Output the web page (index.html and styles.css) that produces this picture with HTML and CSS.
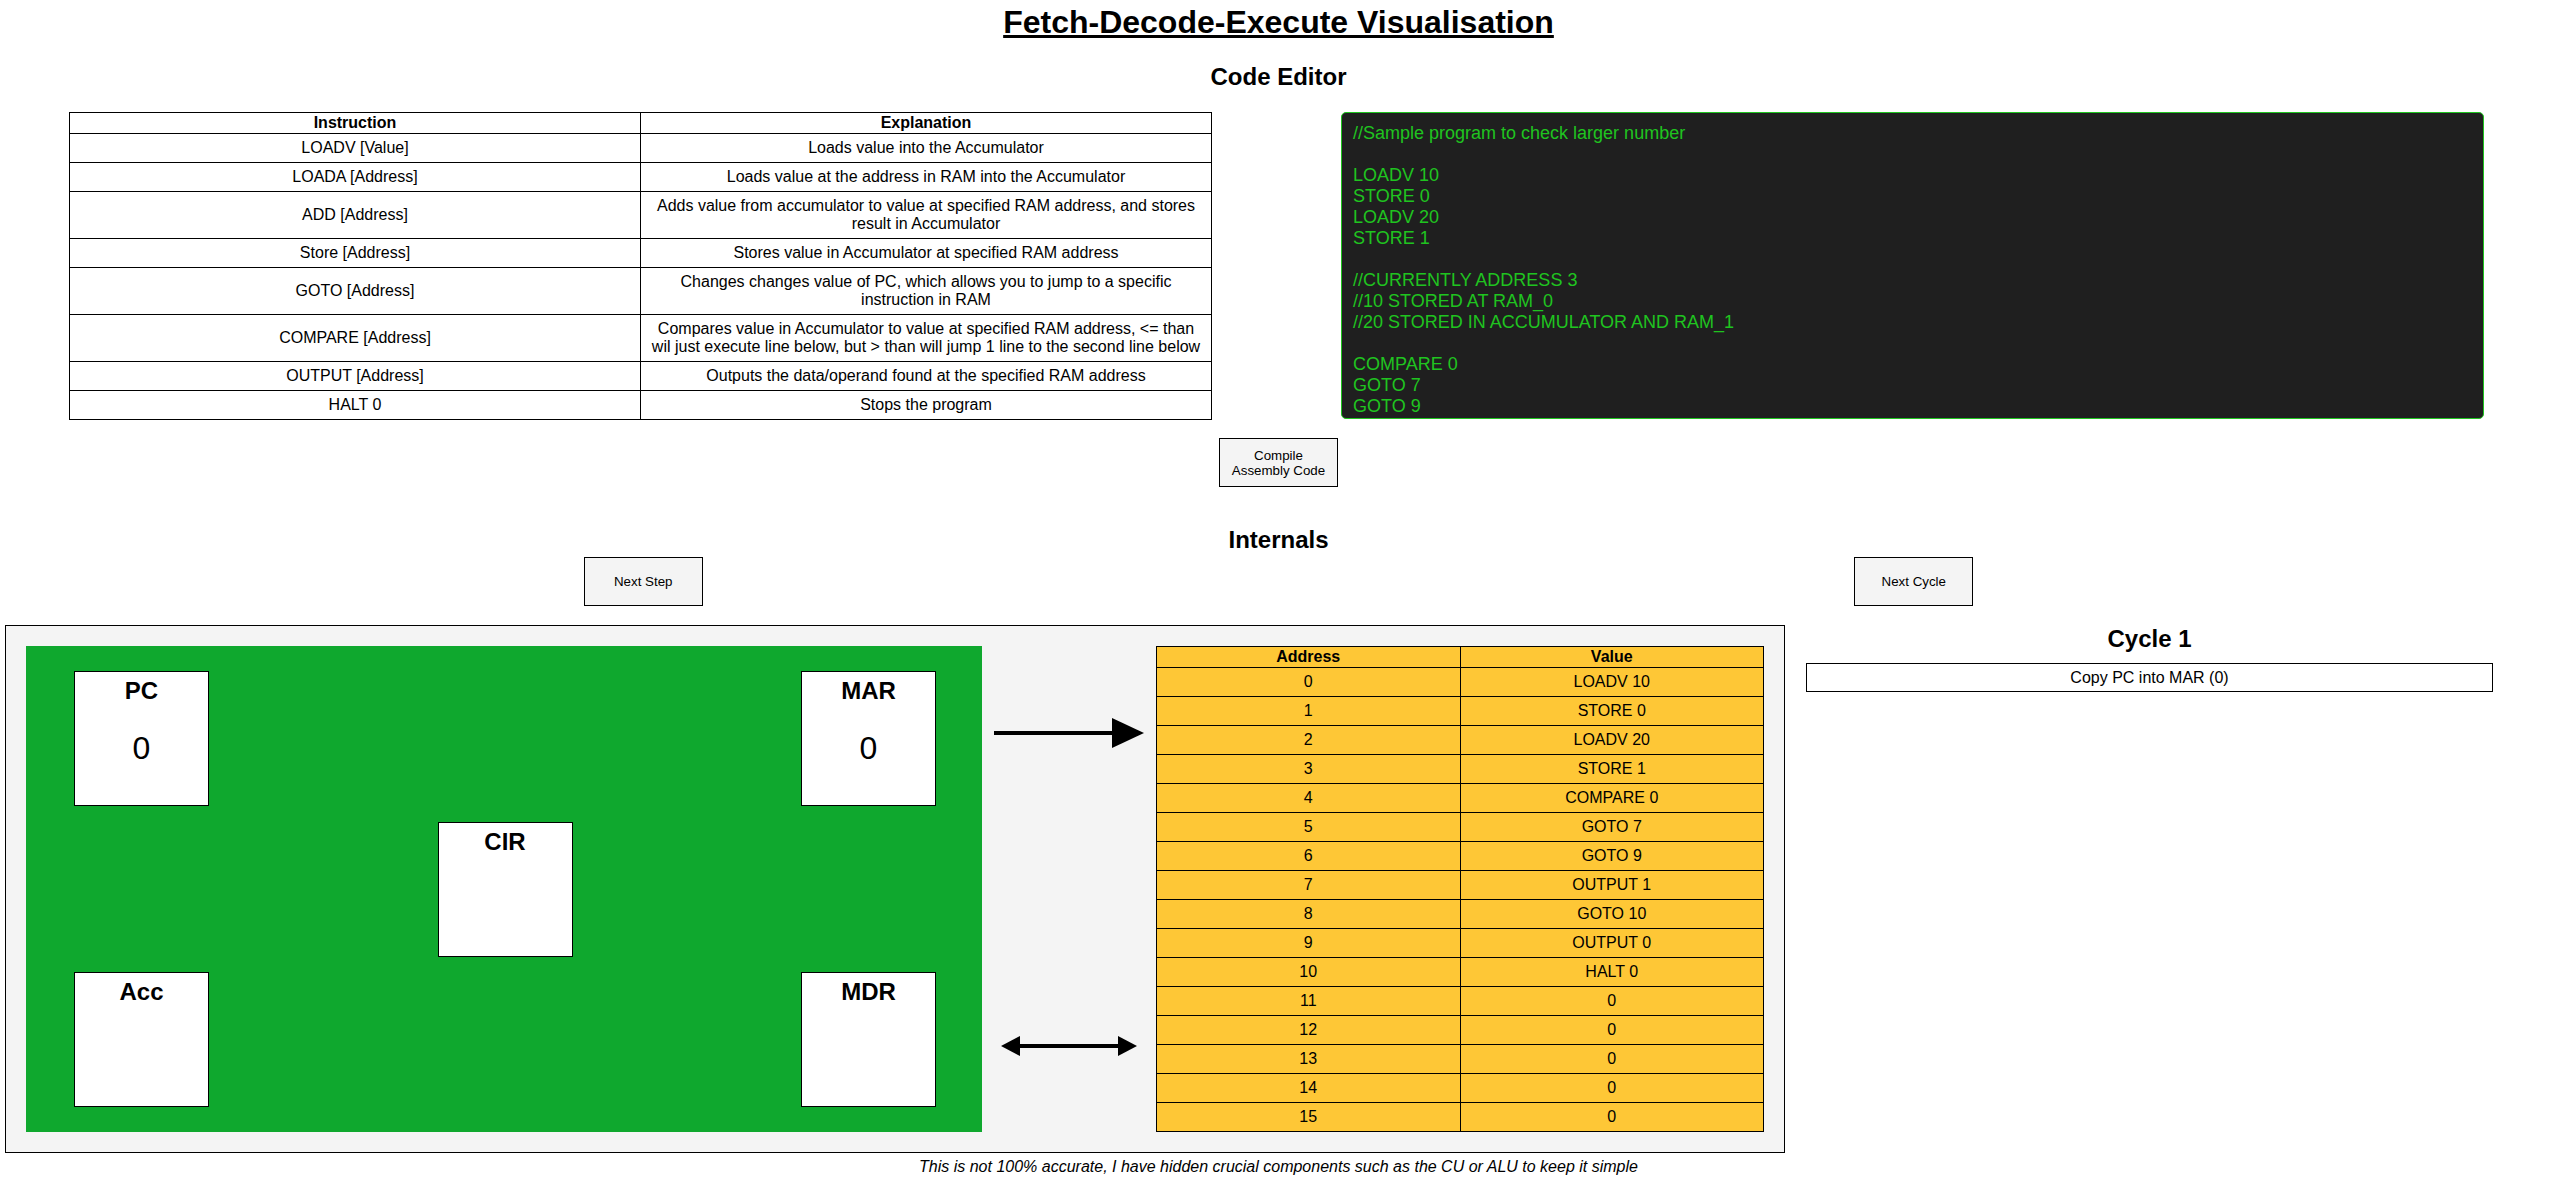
FILE: index.html
```html
<!DOCTYPE html>
<html lang="en">
<head>
<meta charset="utf-8">
<title>Fetch-Decode-Execute Visualisation</title>
<link rel="stylesheet" href="styles.css">
</head>
<body>
<h1 class="title">Fetch-Decode-Execute Visualisation</h1>

<h2 class="section-title editor-title">Code Editor</h2>
<div class="editor-row">
  <table class="ref-table">
    <thead>
      <tr><th>Instruction</th><th>Explanation</th></tr>
    </thead>
    <tbody>
      <tr><td>LOADV [Value]</td><td>Loads value into the Accumulator</td></tr>
      <tr><td>LOADA [Address]</td><td>Loads value at the address in RAM into the Accumulator</td></tr>
      <tr><td>ADD [Address]</td><td>Adds value from accumulator to value at specified RAM address, and stores result in Accumulator</td></tr>
      <tr><td>Store [Address]</td><td>Stores value in Accumulator at specified RAM address</td></tr>
      <tr><td>GOTO [Address]</td><td>Changes changes value of PC, which allows you to jump to a specific instruction in RAM</td></tr>
      <tr><td>COMPARE [Address]</td><td>Compares value in Accumulator to value at specified RAM address, &lt;= than<br>wil just execute line below, but &gt; than will jump 1 line to the second line below</td></tr>
      <tr><td>OUTPUT [Address]</td><td>Outputs the data/operand found at the specified RAM address</td></tr>
      <tr><td>HALT 0</td><td>Stops the program</td></tr>
    </tbody>
  </table>
  <textarea class="code" spellcheck="false">//Sample program to check larger number

LOADV 10
STORE 0
LOADV 20
STORE 1

//CURRENTLY ADDRESS 3
//10 STORED AT RAM_0
//20 STORED IN ACCUMULATOR AND RAM_1

COMPARE 0
GOTO 7
GOTO 9
OUTPUT 1
GOTO 10
OUTPUT 0
HALT 0</textarea>
</div>

<div class="compile-row">
  <button class="btn" type="button">Compile Assembly Code</button>
</div>

<h2 class="section-title internals-title">Internals</h2>
<div class="control-row">
  <div class="control-cell"><button class="btn" type="button">Next Step</button></div>
  <div class="control-cell"><button class="btn" type="button">Next Cycle</button></div>
</div>

<div class="lower">
  <div class="machine">
    <div class="cpu">
      <div class="reg reg-pc"><h3 class="reg-name">PC</h3><div class="reg-val">0</div></div>
      <div class="reg reg-mar"><h3 class="reg-name">MAR</h3><div class="reg-val">0</div></div>
      <div class="reg reg-cir"><h3 class="reg-name">CIR</h3><div class="reg-val"></div></div>
      <div class="reg reg-acc"><h3 class="reg-name">Acc</h3><div class="reg-val"></div></div>
      <div class="reg reg-mdr"><h3 class="reg-name">MDR</h3><div class="reg-val"></div></div>
    </div>
    <div class="buses">
      <svg class="bus bus-addr" width="150" height="30" viewBox="0 0 150 30">
        <line x1="0" y1="15" x2="120" y2="15" stroke="#000" stroke-width="4"/>
        <polygon points="118,0 150,15 118,30" fill="#000"/>
      </svg>
      <svg class="bus bus-data" width="136" height="20" viewBox="0 0 136 20">
        <line x1="16" y1="10" x2="120" y2="10" stroke="#000" stroke-width="4"/>
        <polygon points="0,10 19,0 19,20" fill="#000"/>
        <polygon points="136,10 117,0 117,20" fill="#000"/>
      </svg>
    </div>
    <table class="ram">
      <thead>
        <tr><th>Address</th><th>Value</th></tr>
      </thead>
      <tbody>
        <tr><td>0</td><td>LOADV 10</td></tr>
        <tr><td>1</td><td>STORE 0</td></tr>
        <tr><td>2</td><td>LOADV 20</td></tr>
        <tr><td>3</td><td>STORE 1</td></tr>
        <tr><td>4</td><td>COMPARE 0</td></tr>
        <tr><td>5</td><td>GOTO 7</td></tr>
        <tr><td>6</td><td>GOTO 9</td></tr>
        <tr><td>7</td><td>OUTPUT 1</td></tr>
        <tr><td>8</td><td>GOTO 10</td></tr>
        <tr><td>9</td><td>OUTPUT 0</td></tr>
        <tr><td>10</td><td>HALT 0</td></tr>
        <tr><td>11</td><td>0</td></tr>
        <tr><td>12</td><td>0</td></tr>
        <tr><td>13</td><td>0</td></tr>
        <tr><td>14</td><td>0</td></tr>
        <tr><td>15</td><td>0</td></tr>
      </tbody>
    </table>
  </div>
  <div class="cycle-panel">
    <h2 class="section-title">Cycle 1</h2>
    <div class="cycle-step">Copy PC into MAR (0)</div>
  </div>
</div>

<p class="note">This is not 100% accurate, I have hidden crucial components such as the CU or ALU to keep it simple</p>
</body>
</html>
```

FILE: styles.css
```css
* {
  box-sizing: border-box;
}

html, body {
  background: #fff;
}

body {
  margin: 0;
  padding: 0 8px;
  font-family: "Liberation Sans", Arial, Helvetica, sans-serif;
  color: #000;
}

.title {
  margin: 6px 0 0;
  font-size: 32px;
  line-height: 32px;
  font-weight: 700;
  text-align: center;
  text-decoration: underline;
}

.section-title {
  margin: 0;
  font-size: 24px;
  line-height: 24px;
  font-weight: 700;
  text-align: center;
}

.editor-title {
  margin-top: 27px;
}

.editor-row {
  display: flex;
  align-items: flex-start;
  gap: 129px;
  padding-left: 61px;
  margin-top: 23px;
}

.ref-table {
  width: 1143px;
  flex: none;
  border-collapse: collapse;
  font-size: 16px;
  line-height: 18px;
}

.ref-table th,
.ref-table td {
  width: 50%;
  border: 1px solid #000;
  text-align: center;
  vertical-align: middle;
}

.ref-table th {
  padding: 1px;
  font-weight: 700;
}

.ref-table td {
  padding: 5px;
}

.code {
  display: block;
  width: 1143px;
  height: 307px;
  flex: none;
  margin: 0;
  padding: 10px 11px;
  background: #1f1f1f;
  color: #1fc41f;
  border: 1px solid #1fc41f;
  border-radius: 5px;
  font-family: "Liberation Sans", Arial, Helvetica, sans-serif;
  font-size: 18px;
  line-height: 21px;
  resize: none;
  overflow: hidden;
  outline: none;
  white-space: pre-wrap;
}

.compile-row {
  display: flex;
  justify-content: center;
  margin-top: 18px;
}

.btn {
  width: 119px;
  height: 49px;
  padding: 1px 6px;
  margin: 0;
  background: #f4f4f4;
  border: 1px solid #000;
  border-radius: 0;
  color: #000;
  font-family: "Liberation Sans", Arial, Helvetica, sans-serif;
  font-size: 13.33px;
  line-height: 15px;
}

.internals-title {
  margin-top: 41px;
}

.control-row {
  display: flex;
  justify-content: space-around;
  margin-top: 5px;
}

.control-cell {
  display: flex;
}

.lower {
  display: flex;
  align-items: flex-start;
  margin: 19px 0 0 -3px;
}

.machine {
  display: flex;
  align-items: flex-start;
  width: 1780px;
  flex: none;
  padding: 20px;
  background: #f4f4f4;
  border: 1px solid #000;
}

.cpu {
  width: 956px;
  flex: none;
  display: grid;
  grid-template-columns: 135px 1fr 135px;
  grid-template-rows: 135px 135px 135px;
  row-gap: 15.5px;
  padding: 25px 46px 25px 48px;
  background: #0fa82e;
}

.reg {
  width: 135px;
  height: 135px;
  background: #fff;
  border: 1px solid #000;
  text-align: center;
  padding-top: 7px;
}

.reg-name {
  margin: 0;
  font-size: 24px;
  line-height: 24px;
  font-weight: 700;
}

.reg-val {
  margin-top: 29px;
  font-size: 32px;
  line-height: 32px;
  min-height: 32px;
}

.reg-pc {
  grid-column: 1;
  grid-row: 1;
}

.reg-mar {
  grid-column: 3;
  grid-row: 1;
}

.reg-cir {
  grid-column: 2;
  grid-row: 2;
  justify-self: center;
}

.reg-acc {
  grid-column: 1;
  grid-row: 3;
}

.reg-mdr {
  grid-column: 3;
  grid-row: 3;
}

.buses {
  width: 174px;
  flex: none;
  display: flex;
  flex-direction: column;
  align-items: flex-start;
  padding-top: 72px;
}

.bus {
  display: block;
}

.bus-addr {
  margin-left: 12px;
}

.bus-data {
  margin-left: 19px;
  margin-top: 288px;
}

.ram {
  width: 608px;
  flex: none;
  border-collapse: collapse;
  background: #fec736;
  font-size: 16px;
  line-height: 18px;
}

.ram th,
.ram td {
  width: 50%;
  border: 1px solid #000;
  text-align: center;
}

.ram th {
  padding: 1px;
  font-weight: 700;
}

.ram td {
  padding: 5px;
}

.cycle-panel {
  width: 687px;
  flex: none;
  margin-left: 21px;
  margin-top: 2px;
}

.cycle-step {
  margin-top: 12px;
  border: 1px solid #000;
  padding: 5px;
  font-size: 16px;
  line-height: 17px;
  text-align: center;
}

.note {
  margin: 5px 0 0;
  font-size: 16px;
  line-height: 18px;
  font-style: italic;
  text-align: center;
}
```
